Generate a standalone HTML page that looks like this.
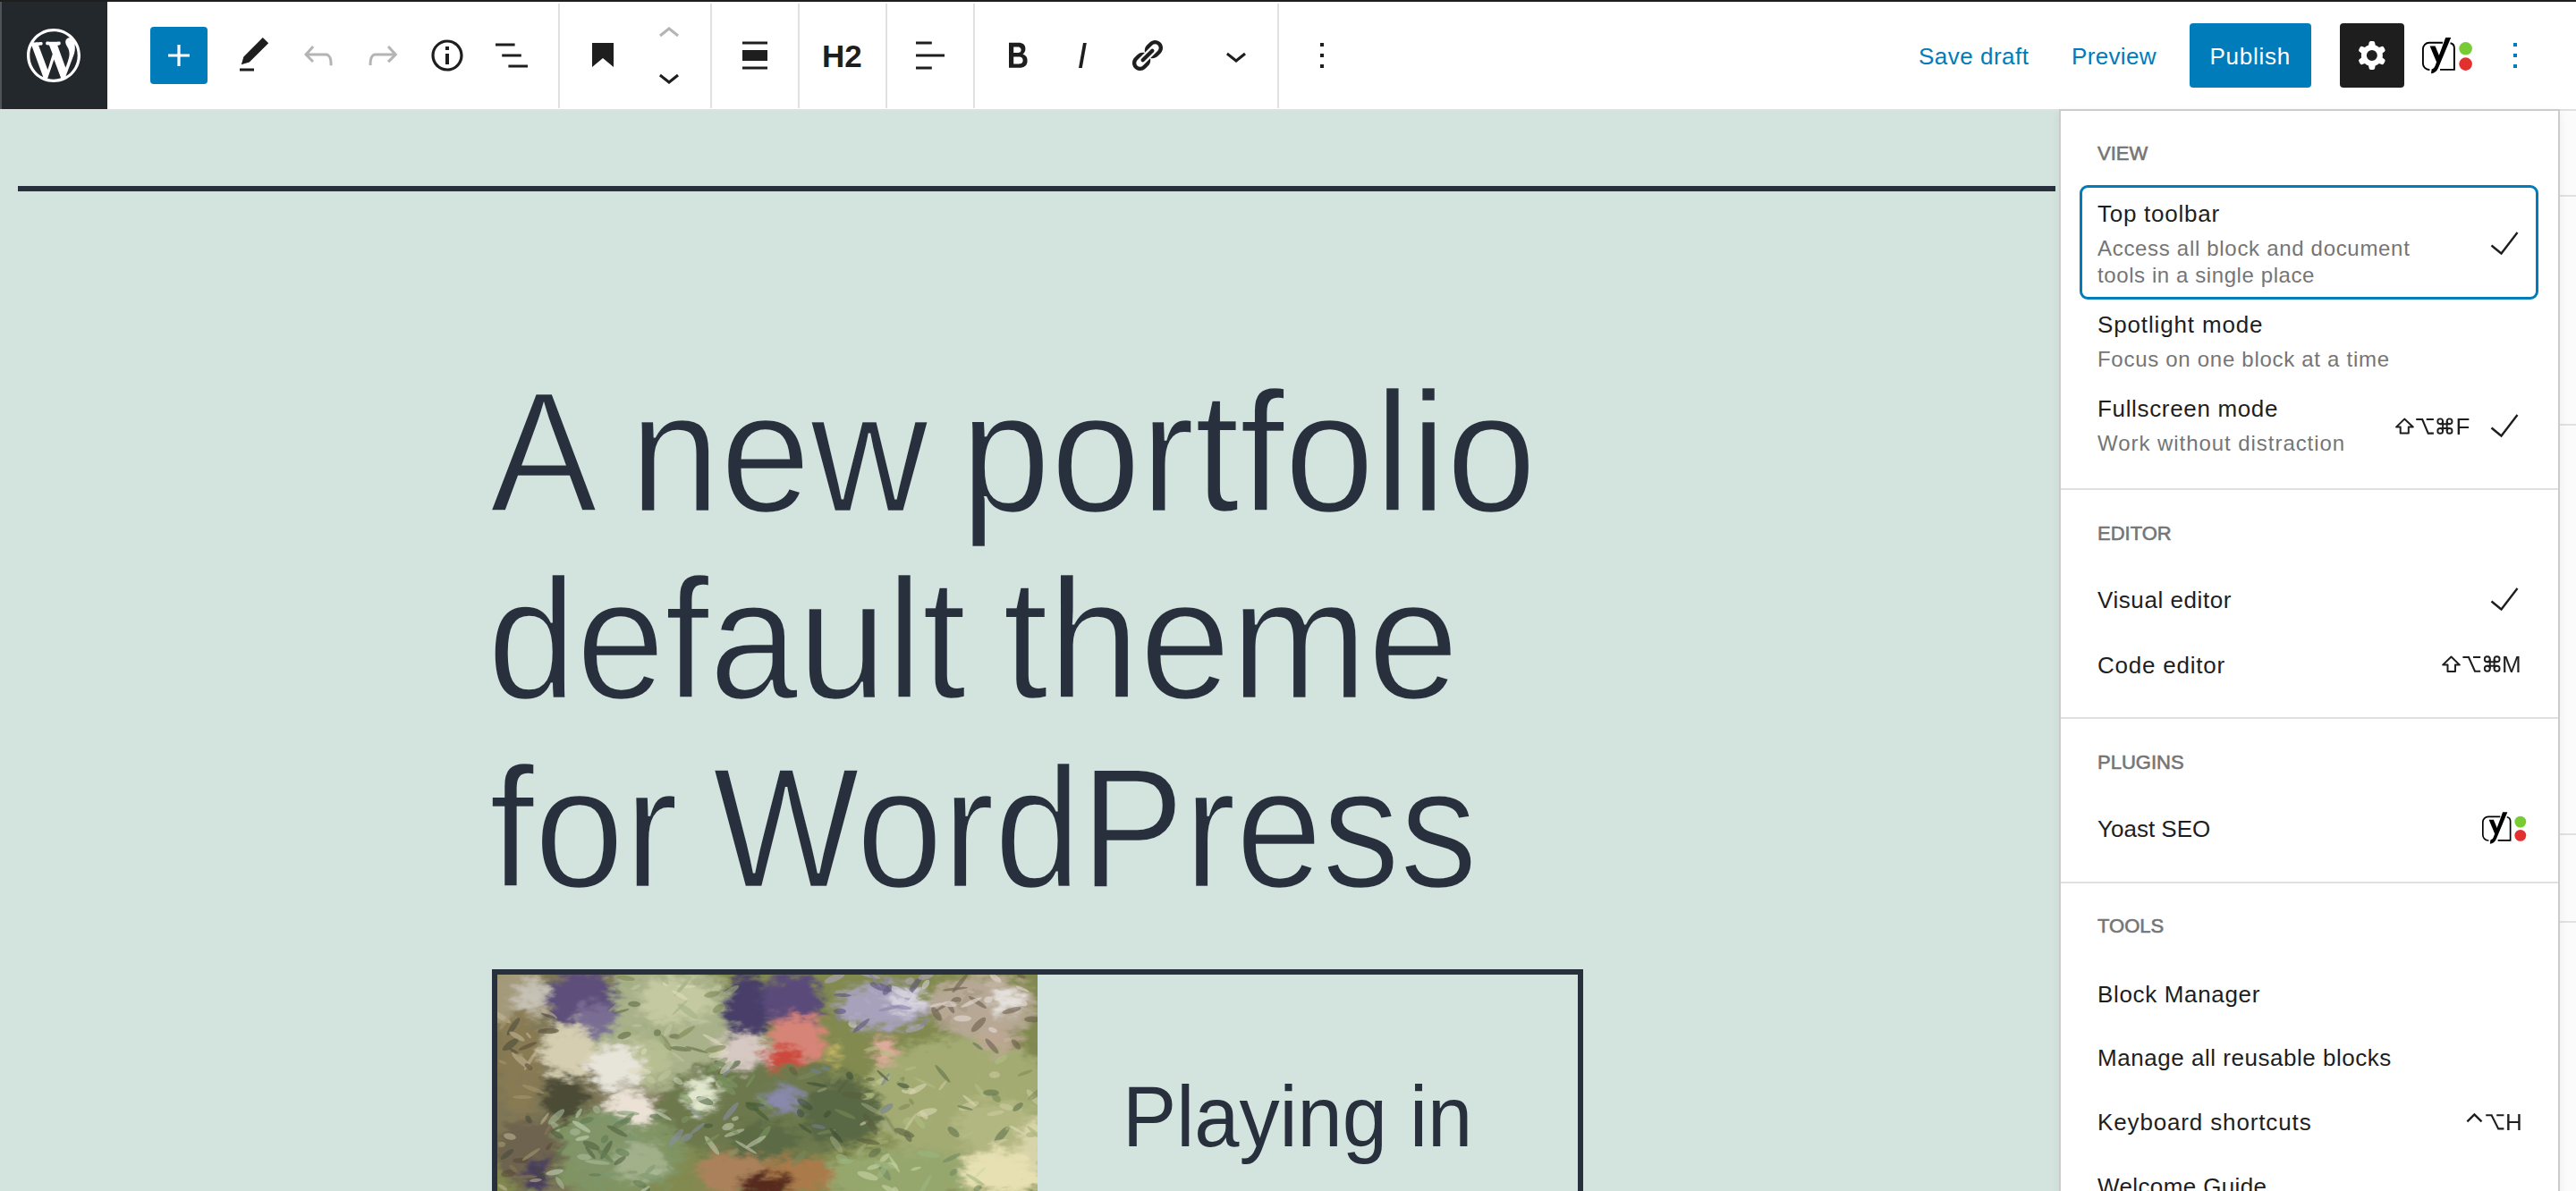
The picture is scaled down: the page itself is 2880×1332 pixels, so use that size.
<!DOCTYPE html>
<html><head><meta charset="utf-8">
<style>
html,body{margin:0;padding:0;}
body{width:2880px;height:1332px;overflow:hidden;position:relative;background:#d3e3de;font-family:"Liberation Sans",sans-serif;}
.a{position:absolute;}
.t{position:absolute;white-space:nowrap;line-height:1;font-family:"Liberation Sans",sans-serif;}
svg{position:absolute;overflow:visible;}
.sep{position:absolute;top:4px;width:2px;height:117px;background:#e0e0e0;}
.h{transform-origin:0 0;-webkit-text-stroke:2px #d3e3de;}
</style></head>
<body>
<div class="a" style="left:20px;top:208px;width:2278px;height:6px;background:#28303d"></div>
<div class="t" style="left:548.2px;top:410.4px;font-size:192px;color:#28303d;transform:scaleX(0.9344);transform-origin:0 0;-webkit-text-stroke:2.6px #d3e3de">A</div>
<div class="t" style="left:703.5px;top:410.4px;font-size:192px;color:#28303d;transform:scaleX(0.9472);transform-origin:0 0;-webkit-text-stroke:2.6px #d3e3de">new</div>
<div class="t" style="left:1074.1px;top:410.4px;font-size:192px;color:#28303d;transform:scaleX(0.9424);transform-origin:0 0;-webkit-text-stroke:2.6px #d3e3de">portfolio</div>
<div class="t" style="left:545.3px;top:619.4px;font-size:192px;color:#28303d;transform:scaleX(0.9287);transform-origin:0 0;-webkit-text-stroke:2.6px #d3e3de">default</div>
<div class="t" style="left:1121.2px;top:619.4px;font-size:192px;color:#28303d;transform:scaleX(0.9558);transform-origin:0 0;-webkit-text-stroke:2.6px #d3e3de">theme</div>
<div class="t" style="left:547.2px;top:830.4px;font-size:192px;color:#28303d;transform:scaleX(0.9426);transform-origin:0 0;-webkit-text-stroke:2.6px #d3e3de">for</div>
<div class="t" style="left:797.3px;top:830.4px;font-size:192px;color:#28303d;transform:scaleX(0.9034);transform-origin:0 0;-webkit-text-stroke:2.6px #d3e3de">WordPress</div>
<div class="a" style="left:550px;top:1084px;width:1208px;height:300px;border:6px solid #28303d"></div>
<div class="a" style="left:556px;top:1090px;width:604px;height:242px;overflow:hidden;background:#828a50">
<svg style="left:0;top:0" width="604" height="242" viewBox="0 0 604 242"><defs><filter id="bl" x="-20%" y="-20%" width="140%" height="140%"><feGaussianBlur stdDeviation="5" result="b"/><feTurbulence type="fractalNoise" baseFrequency="0.06 0.12" numOctaves="3" seed="7" result="n"/><feDisplacementMap in="b" in2="n" scale="26" xChannelSelector="R" yChannelSelector="G"/></filter></defs><filter id="sd"><feColorMatrix type="saturate" values="0.85"/></filter><g filter="url(#sd)"><g filter="url(#bl)"><ellipse cx="90" cy="120" rx="110" ry="140" fill="#7e7650" opacity="1" transform="rotate(0 90 120)"/><ellipse cx="190" cy="60" rx="90" ry="70" fill="#a8b282" opacity="1" transform="rotate(0 190 60)"/><ellipse cx="200" cy="30" rx="40" ry="25" fill="#c8cc9c" opacity="0.9" transform="rotate(0 200 30)"/><ellipse cx="165" cy="95" rx="30" ry="22" fill="#b8c08a" opacity="0.9" transform="rotate(0 165 95)"/><ellipse cx="300" cy="150" rx="120" ry="60" fill="#6c7a42" opacity="1" transform="rotate(0 300 150)"/><ellipse cx="520" cy="140" rx="110" ry="70" fill="#a2ac66" opacity="1" transform="rotate(0 520 140)"/><ellipse cx="560" cy="170" rx="50" ry="30" fill="#b4b878" opacity="0.9" transform="rotate(0 560 170)"/><ellipse cx="130" cy="200" rx="80" ry="50" fill="#7e9458" opacity="1" transform="rotate(0 130 200)"/><ellipse cx="450" cy="225" rx="90" ry="30" fill="#94a862" opacity="1" transform="rotate(0 450 225)"/><ellipse cx="20" cy="25" rx="40" ry="35" fill="#a49a74" opacity="1" transform="rotate(0 20 25)"/><ellipse cx="40" cy="24" rx="22" ry="16" fill="#c8c2b4" opacity="1" transform="rotate(0 40 24)"/><ellipse cx="95" cy="30" rx="40" ry="34" fill="#5e4e80" opacity="1" transform="rotate(0 95 30)"/><ellipse cx="110" cy="50" rx="22" ry="18" fill="#7a6c98" opacity="1" transform="rotate(0 110 50)"/><ellipse cx="80" cy="85" rx="32" ry="30" fill="#d6ceaa" opacity="1" transform="rotate(0 80 85)"/><ellipse cx="132" cy="104" rx="32" ry="24" fill="#e8e4d8" opacity="1" transform="rotate(0 132 104)"/><ellipse cx="148" cy="152" rx="28" ry="22" fill="#ece2d2" opacity="1" transform="rotate(0 148 152)"/><ellipse cx="25" cy="100" rx="25" ry="60" fill="#8a7a48" opacity="1" transform="rotate(0 25 100)"/><ellipse cx="75" cy="138" rx="26" ry="24" fill="#4c4c32" opacity="1" transform="rotate(0 75 138)"/><ellipse cx="35" cy="200" rx="38" ry="40" fill="#6e6448" opacity="1" transform="rotate(0 35 200)"/><ellipse cx="45" cy="225" rx="14" ry="20" fill="#4a3e60" opacity="1" transform="rotate(0 45 225)"/><ellipse cx="120" cy="190" rx="45" ry="35" fill="#7e9660" opacity="1" transform="rotate(0 120 190)"/><ellipse cx="160" cy="210" rx="30" ry="22" fill="#a4b488" opacity="0.9" transform="rotate(0 160 210)"/><ellipse cx="279" cy="38" rx="26" ry="38" fill="#483c6e" opacity="1" transform="rotate(0 279 38)"/><ellipse cx="330" cy="30" rx="34" ry="32" fill="#5a4a80" opacity="1" transform="rotate(0 330 30)"/><ellipse cx="274" cy="86" rx="30" ry="20" fill="#d8c8c0" opacity="1" transform="rotate(0 274 86)"/><ellipse cx="228" cy="135" rx="17" ry="20" fill="#e0e8c8" opacity="1" transform="rotate(0 228 135)"/><ellipse cx="336" cy="72" rx="32" ry="28" fill="#e08070" opacity="1" transform="rotate(0 336 72)"/><ellipse cx="320" cy="93" rx="22" ry="12" fill="#d83a2a" opacity="1" transform="rotate(0 320 93)"/><ellipse cx="377" cy="88" rx="8" ry="10" fill="#d8c050" opacity="0.9" transform="rotate(0 377 88)"/><ellipse cx="433" cy="86" rx="13" ry="15" fill="#e8a898" opacity="1" transform="rotate(0 433 86)"/><ellipse cx="432" cy="35" rx="52" ry="26" fill="#a8a0c0" opacity="1" transform="rotate(0 432 35)"/><ellipse cx="460" cy="30" rx="22" ry="12" fill="#d8d4e0" opacity="1" transform="rotate(0 460 30)"/><ellipse cx="543" cy="35" rx="60" ry="36" fill="#b8a890" opacity="1" transform="rotate(0 543 35)"/><ellipse cx="570" cy="30" rx="18" ry="12" fill="#e6e2dc" opacity="1" transform="rotate(0 570 30)"/><ellipse cx="560" cy="75" rx="24" ry="12" fill="#c8a898" opacity="0.8" transform="rotate(0 560 75)"/><ellipse cx="320" cy="139" rx="22" ry="13" fill="#8888b0" opacity="1" transform="rotate(0 320 139)"/><ellipse cx="385" cy="155" rx="44" ry="38" fill="#586a3c" opacity="1" transform="rotate(0 385 155)"/><ellipse cx="300" cy="185" rx="40" ry="20" fill="#5a6c3c" opacity="1" transform="rotate(0 300 185)"/><ellipse cx="265" cy="222" rx="42" ry="24" fill="#b08050" opacity="1" transform="rotate(0 265 222)"/><ellipse cx="335" cy="225" rx="40" ry="20" fill="#b07838" opacity="1" transform="rotate(0 335 225)"/><ellipse cx="300" cy="236" rx="30" ry="14" fill="#5a2818" opacity="1" transform="rotate(0 300 236)"/><ellipse cx="565" cy="222" rx="48" ry="26" fill="#e8e0a8" opacity="1" transform="rotate(0 565 222)"/><ellipse cx="600" cy="190" rx="16" ry="30" fill="#d8d4a0" opacity="1" transform="rotate(0 600 190)"/></g><g opacity="0.8"><ellipse cx="27" cy="152" rx="13" ry="2.7" fill="#8a7a50" opacity="0.7" transform="rotate(1 27 152)"/><ellipse cx="11" cy="201" rx="9" ry="3.0" fill="#4a4a38" opacity="0.7" transform="rotate(-38 11 201)"/><ellipse cx="18" cy="58" rx="12" ry="3.2" fill="#4a4a38" opacity="0.7" transform="rotate(-55 18 58)"/><ellipse cx="58" cy="171" rx="10" ry="1.9" fill="#8a7a50" opacity="0.7" transform="rotate(-58 58 171)"/><ellipse cx="4" cy="47" rx="13" ry="3.0" fill="#c8b890" opacity="0.7" transform="rotate(33 4 47)"/><ellipse cx="26" cy="208" rx="9" ry="3.1" fill="#5a4a30" opacity="0.7" transform="rotate(-0 26 208)"/><ellipse cx="27" cy="96" rx="14" ry="4.0" fill="#c8b890" opacity="0.7" transform="rotate(41 27 96)"/><ellipse cx="19" cy="86" rx="7" ry="1.7" fill="#4a4a38" opacity="0.7" transform="rotate(32 19 86)"/><ellipse cx="6" cy="98" rx="5" ry="1.5" fill="#a89868" opacity="0.7" transform="rotate(22 6 98)"/><ellipse cx="13" cy="222" rx="9" ry="4.0" fill="#5a4a30" opacity="0.7" transform="rotate(-12 13 222)"/><ellipse cx="34" cy="80" rx="11" ry="2.3" fill="#5a4a30" opacity="0.7" transform="rotate(-23 34 80)"/><ellipse cx="58" cy="192" rx="5" ry="2.1" fill="#5a4a30" opacity="0.7" transform="rotate(-48 58 192)"/><ellipse cx="28" cy="137" rx="11" ry="2.0" fill="#a89868" opacity="0.7" transform="rotate(1 28 137)"/><ellipse cx="25" cy="117" rx="8" ry="4.0" fill="#8a7a50" opacity="0.7" transform="rotate(-60 25 117)"/><ellipse cx="18" cy="217" rx="6" ry="2.5" fill="#8a7a50" opacity="0.7" transform="rotate(43 18 217)"/><ellipse cx="6" cy="238" rx="6" ry="2.1" fill="#c8b890" opacity="0.7" transform="rotate(33 6 238)"/><ellipse cx="50" cy="117" rx="5" ry="2.0" fill="#5a4a30" opacity="0.7" transform="rotate(16 50 117)"/><ellipse cx="36" cy="114" rx="9" ry="3.9" fill="#8a7a50" opacity="0.7" transform="rotate(-2 36 114)"/><ellipse cx="8" cy="117" rx="10" ry="2.3" fill="#8a7a50" opacity="0.7" transform="rotate(-33 8 117)"/><ellipse cx="15" cy="78" rx="11" ry="3.9" fill="#4a4a38" opacity="0.7" transform="rotate(-36 15 78)"/><ellipse cx="53" cy="161" rx="8" ry="1.8" fill="#c8b890" opacity="0.7" transform="rotate(-55 53 161)"/><ellipse cx="14" cy="181" rx="7" ry="3.6" fill="#c8b890" opacity="0.7" transform="rotate(12 14 181)"/><ellipse cx="31" cy="226" rx="14" ry="1.8" fill="#8a7a50" opacity="0.7" transform="rotate(-2 31 226)"/><ellipse cx="37" cy="96" rx="13" ry="2.0" fill="#c8b890" opacity="0.7" transform="rotate(-58 37 96)"/><ellipse cx="25" cy="90" rx="4" ry="2.2" fill="#a89868" opacity="0.7" transform="rotate(4 25 90)"/><ellipse cx="6" cy="68" rx="9" ry="2.3" fill="#8a7a50" opacity="0.7" transform="rotate(28 6 68)"/><ellipse cx="35" cy="68" rx="4" ry="1.5" fill="#c8b890" opacity="0.7" transform="rotate(49 35 68)"/><ellipse cx="58" cy="44" rx="10" ry="2.7" fill="#c8b890" opacity="0.7" transform="rotate(28 58 44)"/><ellipse cx="8" cy="54" rx="9" ry="2.4" fill="#a89868" opacity="0.7" transform="rotate(-55 8 54)"/><ellipse cx="48" cy="223" rx="8" ry="3.2" fill="#4a4a38" opacity="0.7" transform="rotate(48 48 223)"/><ellipse cx="57" cy="46" rx="9" ry="1.5" fill="#4a4a38" opacity="0.7" transform="rotate(19 57 46)"/><ellipse cx="35" cy="162" rx="5" ry="3.1" fill="#4a4a38" opacity="0.7" transform="rotate(59 35 162)"/><ellipse cx="44" cy="118" rx="11" ry="3.0" fill="#8a7a50" opacity="0.7" transform="rotate(-7 44 118)"/><ellipse cx="5" cy="190" rx="4" ry="3.0" fill="#a89868" opacity="0.7" transform="rotate(-2 5 190)"/><ellipse cx="57" cy="63" rx="12" ry="3.2" fill="#5a4a30" opacity="0.7" transform="rotate(-2 57 63)"/><ellipse cx="22" cy="69" rx="10" ry="2.8" fill="#c8b890" opacity="0.7" transform="rotate(30 22 69)"/><ellipse cx="40" cy="128" rx="13" ry="2.3" fill="#a89868" opacity="0.7" transform="rotate(20 40 128)"/><ellipse cx="38" cy="201" rx="12" ry="2.0" fill="#a89868" opacity="0.7" transform="rotate(-34 38 201)"/><ellipse cx="35" cy="103" rx="5" ry="2.7" fill="#5a4a30" opacity="0.7" transform="rotate(40 35 103)"/><ellipse cx="43" cy="230" rx="7" ry="1.9" fill="#c8b890" opacity="0.7" transform="rotate(-6 43 230)"/><ellipse cx="250" cy="100" rx="8" ry="2.8" fill="#5a6a3a" opacity="0.7" transform="rotate(21 250 100)"/><ellipse cx="189" cy="9" rx="4" ry="3.7" fill="#e0dcb8" opacity="0.7" transform="rotate(-55 189 9)"/><ellipse cx="204" cy="37" rx="12" ry="1.5" fill="#a0b078" opacity="0.7" transform="rotate(-44 204 37)"/><ellipse cx="155" cy="92" rx="7" ry="3.4" fill="#c0c898" opacity="0.7" transform="rotate(36 155 92)"/><ellipse cx="188" cy="76" rx="11" ry="3.5" fill="#7a8848" opacity="0.7" transform="rotate(55 188 76)"/><ellipse cx="156" cy="57" rx="6" ry="1.5" fill="#c0c898" opacity="0.7" transform="rotate(-3 156 57)"/><ellipse cx="153" cy="33" rx="7" ry="3.2" fill="#5a6a3a" opacity="0.7" transform="rotate(2 153 33)"/><ellipse cx="260" cy="19" rx="12" ry="3.2" fill="#a0b078" opacity="0.7" transform="rotate(-33 260 19)"/><ellipse cx="251" cy="87" rx="5" ry="2.6" fill="#c0c898" opacity="0.7" transform="rotate(15 251 87)"/><ellipse cx="179" cy="68" rx="13" ry="3.5" fill="#a0b078" opacity="0.7" transform="rotate(53 179 68)"/><ellipse cx="172" cy="118" rx="5" ry="3.7" fill="#c0c898" opacity="0.7" transform="rotate(36 172 118)"/><ellipse cx="158" cy="108" rx="14" ry="3.9" fill="#e0dcb8" opacity="0.7" transform="rotate(4 158 108)"/><ellipse cx="164" cy="86" rx="4" ry="2.8" fill="#e0dcb8" opacity="0.7" transform="rotate(-56 164 86)"/><ellipse cx="202" cy="92" rx="9" ry="1.6" fill="#c0c898" opacity="0.7" transform="rotate(37 202 92)"/><ellipse cx="186" cy="4" rx="9" ry="3.2" fill="#a0b078" opacity="0.7" transform="rotate(50 186 4)"/><ellipse cx="149" cy="62" rx="11" ry="3.6" fill="#a0b078" opacity="0.7" transform="rotate(23 149 62)"/><ellipse cx="205" cy="83" rx="12" ry="2.6" fill="#5a6a3a" opacity="0.7" transform="rotate(7 205 83)"/><ellipse cx="213" cy="63" rx="12" ry="2.9" fill="#a0b078" opacity="0.7" transform="rotate(-23 213 63)"/><ellipse cx="254" cy="104" rx="10" ry="2.3" fill="#5a6a3a" opacity="0.7" transform="rotate(-43 254 104)"/><ellipse cx="198" cy="69" rx="6" ry="2.8" fill="#5a6a3a" opacity="0.7" transform="rotate(0 198 69)"/><ellipse cx="179" cy="65" rx="4" ry="3.8" fill="#5a6a3a" opacity="0.7" transform="rotate(5 179 65)"/><ellipse cx="146" cy="11" rx="6" ry="3.8" fill="#a0b078" opacity="0.7" transform="rotate(-5 146 11)"/><ellipse cx="165" cy="57" rx="5" ry="2.6" fill="#a0b078" opacity="0.7" transform="rotate(38 165 57)"/><ellipse cx="198" cy="13" rx="8" ry="1.6" fill="#c0c898" opacity="0.7" transform="rotate(-29 198 13)"/><ellipse cx="135" cy="19" rx="4" ry="2.2" fill="#7a8848" opacity="0.7" transform="rotate(27 135 19)"/><ellipse cx="211" cy="13" rx="11" ry="1.8" fill="#e0dcb8" opacity="0.7" transform="rotate(1 211 13)"/><ellipse cx="223" cy="84" rx="13" ry="1.6" fill="#5a6a3a" opacity="0.7" transform="rotate(16 223 84)"/><ellipse cx="210" cy="65" rx="13" ry="2.8" fill="#7a8848" opacity="0.7" transform="rotate(-34 210 65)"/><ellipse cx="241" cy="73" rx="13" ry="2.1" fill="#e0dcb8" opacity="0.7" transform="rotate(29 241 73)"/><ellipse cx="247" cy="38" rx="7" ry="3.8" fill="#7a8848" opacity="0.7" transform="rotate(-34 247 38)"/><ellipse cx="245" cy="16" rx="6" ry="3.3" fill="#c0c898" opacity="0.7" transform="rotate(-29 245 16)"/><ellipse cx="187" cy="113" rx="9" ry="3.3" fill="#c0c898" opacity="0.7" transform="rotate(-36 187 113)"/><ellipse cx="142" cy="68" rx="8" ry="3.6" fill="#5a6a3a" opacity="0.7" transform="rotate(-17 142 68)"/><ellipse cx="213" cy="41" rx="14" ry="3.6" fill="#a0b078" opacity="0.7" transform="rotate(36 213 41)"/><ellipse cx="144" cy="4" rx="10" ry="2.8" fill="#7a8848" opacity="0.7" transform="rotate(8 144 4)"/><ellipse cx="155" cy="14" rx="6" ry="1.9" fill="#c0c898" opacity="0.7" transform="rotate(-26 155 14)"/><ellipse cx="205" cy="16" rx="11" ry="1.7" fill="#a0b078" opacity="0.7" transform="rotate(-48 205 16)"/><ellipse cx="191" cy="62" rx="8" ry="3.0" fill="#c0c898" opacity="0.7" transform="rotate(-58 191 62)"/><ellipse cx="240" cy="22" rx="9" ry="3.3" fill="#7a8848" opacity="0.7" transform="rotate(-11 240 22)"/><ellipse cx="209" cy="11" rx="12" ry="2.3" fill="#a0b078" opacity="0.7" transform="rotate(-50 209 11)"/><ellipse cx="204" cy="23" rx="10" ry="2.4" fill="#e0dcb8" opacity="0.7" transform="rotate(31 204 23)"/><ellipse cx="248" cy="89" rx="12" ry="3.5" fill="#e0dcb8" opacity="0.7" transform="rotate(-11 248 89)"/><ellipse cx="244" cy="83" rx="12" ry="3.4" fill="#7a8848" opacity="0.7" transform="rotate(-11 244 83)"/><ellipse cx="139" cy="41" rx="9" ry="1.5" fill="#5a6a3a" opacity="0.7" transform="rotate(-17 139 41)"/><ellipse cx="136" cy="33" rx="14" ry="2.2" fill="#a0b078" opacity="0.7" transform="rotate(-34 136 33)"/><ellipse cx="140" cy="199" rx="8" ry="4.0" fill="#5a7a48" opacity="0.7" transform="rotate(17 140 199)"/><ellipse cx="167" cy="240" rx="4" ry="3.0" fill="#4a6038" opacity="0.7" transform="rotate(29 167 240)"/><ellipse cx="122" cy="196" rx="12" ry="3.1" fill="#4a6038" opacity="0.7" transform="rotate(-59 122 196)"/><ellipse cx="95" cy="233" rx="10" ry="2.8" fill="#7a9868" opacity="0.7" transform="rotate(56 95 233)"/><ellipse cx="178" cy="159" rx="8" ry="3.1" fill="#5a7a48" opacity="0.7" transform="rotate(6 178 159)"/><ellipse cx="114" cy="236" rx="8" ry="3.9" fill="#7a9868" opacity="0.7" transform="rotate(43 114 236)"/><ellipse cx="146" cy="155" rx="13" ry="2.6" fill="#7a9868" opacity="0.7" transform="rotate(3 146 155)"/><ellipse cx="104" cy="199" rx="9" ry="2.2" fill="#4a6038" opacity="0.7" transform="rotate(52 104 199)"/><ellipse cx="64" cy="221" rx="10" ry="3.1" fill="#c8d8b8" opacity="0.7" transform="rotate(-11 64 221)"/><ellipse cx="67" cy="179" rx="8" ry="3.0" fill="#4a6038" opacity="0.7" transform="rotate(27 67 179)"/><ellipse cx="70" cy="233" rx="8" ry="2.7" fill="#a8c098" opacity="0.7" transform="rotate(57 70 233)"/><ellipse cx="66" cy="159" rx="12" ry="3.8" fill="#a8c098" opacity="0.7" transform="rotate(-43 66 159)"/><ellipse cx="145" cy="161" rx="10" ry="2.6" fill="#5a7a48" opacity="0.7" transform="rotate(-36 145 161)"/><ellipse cx="110" cy="164" rx="8" ry="1.8" fill="#7a9868" opacity="0.7" transform="rotate(-10 110 164)"/><ellipse cx="97" cy="204" rx="8" ry="3.4" fill="#a8c098" opacity="0.7" transform="rotate(4 97 204)"/><ellipse cx="193" cy="218" rx="6" ry="1.8" fill="#7a9868" opacity="0.7" transform="rotate(47 193 218)"/><ellipse cx="147" cy="183" rx="7" ry="3.2" fill="#7a9868" opacity="0.7" transform="rotate(8 147 183)"/><ellipse cx="87" cy="176" rx="6" ry="3.9" fill="#a8c098" opacity="0.7" transform="rotate(0 87 176)"/><ellipse cx="183" cy="154" rx="5" ry="2.2" fill="#7a9868" opacity="0.7" transform="rotate(-9 183 154)"/><ellipse cx="65" cy="170" rx="7" ry="3.4" fill="#a8c098" opacity="0.7" transform="rotate(50 65 170)"/><ellipse cx="137" cy="208" rx="8" ry="2.7" fill="#4a6038" opacity="0.7" transform="rotate(-35 137 208)"/><ellipse cx="129" cy="162" rx="13" ry="3.5" fill="#7a9868" opacity="0.7" transform="rotate(-6 129 162)"/><ellipse cx="177" cy="221" rx="8" ry="3.4" fill="#a8c098" opacity="0.7" transform="rotate(-13 177 221)"/><ellipse cx="112" cy="210" rx="14" ry="2.3" fill="#a8c098" opacity="0.7" transform="rotate(6 112 210)"/><ellipse cx="120" cy="184" rx="5" ry="3.7" fill="#5a7a48" opacity="0.7" transform="rotate(-51 120 184)"/><ellipse cx="120" cy="202" rx="12" ry="2.7" fill="#5a7a48" opacity="0.7" transform="rotate(39 120 202)"/><ellipse cx="71" cy="170" rx="11" ry="1.7" fill="#4a6038" opacity="0.7" transform="rotate(-24 71 170)"/><ellipse cx="100" cy="163" rx="8" ry="3.3" fill="#5a7a48" opacity="0.7" transform="rotate(-16 100 163)"/><ellipse cx="105" cy="191" rx="10" ry="3.8" fill="#4a6038" opacity="0.7" transform="rotate(22 105 191)"/><ellipse cx="121" cy="224" rx="7" ry="2.3" fill="#7a9868" opacity="0.7" transform="rotate(-12 121 224)"/><ellipse cx="95" cy="183" rx="8" ry="2.4" fill="#c8d8b8" opacity="0.7" transform="rotate(-13 95 183)"/><ellipse cx="171" cy="218" rx="8" ry="2.5" fill="#7a9868" opacity="0.7" transform="rotate(-41 171 218)"/><ellipse cx="139" cy="166" rx="12" ry="3.7" fill="#5a7a48" opacity="0.7" transform="rotate(-26 139 166)"/><ellipse cx="91" cy="155" rx="6" ry="2.2" fill="#c8d8b8" opacity="0.7" transform="rotate(-57 91 155)"/><ellipse cx="69" cy="200" rx="12" ry="1.7" fill="#5a7a48" opacity="0.7" transform="rotate(-50 69 200)"/><ellipse cx="186" cy="158" rx="10" ry="1.9" fill="#c8d8b8" opacity="0.7" transform="rotate(29 186 158)"/><ellipse cx="94" cy="170" rx="12" ry="2.8" fill="#c8d8b8" opacity="0.7" transform="rotate(32 94 170)"/><ellipse cx="109" cy="224" rx="7" ry="1.8" fill="#5a7a48" opacity="0.7" transform="rotate(-1 109 224)"/><ellipse cx="159" cy="234" rx="8" ry="3.6" fill="#5a7a48" opacity="0.7" transform="rotate(20 159 234)"/><ellipse cx="173" cy="227" rx="13" ry="3.9" fill="#7a9868" opacity="0.7" transform="rotate(17 173 227)"/><ellipse cx="111" cy="151" rx="5" ry="3.8" fill="#a8c098" opacity="0.7" transform="rotate(50 111 151)"/><ellipse cx="164" cy="241" rx="8" ry="1.9" fill="#c8d8b8" opacity="0.7" transform="rotate(-35 164 241)"/><ellipse cx="134" cy="175" rx="13" ry="2.7" fill="#4a6038" opacity="0.7" transform="rotate(28 134 175)"/><ellipse cx="151" cy="221" rx="6" ry="1.7" fill="#7a9868" opacity="0.7" transform="rotate(-5 151 221)"/><ellipse cx="127" cy="224" rx="7" ry="2.0" fill="#7a9868" opacity="0.7" transform="rotate(-17 127 224)"/><ellipse cx="224" cy="172" rx="10" ry="2.1" fill="#8890b0" opacity="0.7" transform="rotate(-38 224 172)"/><ellipse cx="240" cy="191" rx="13" ry="3.1" fill="#c8d0b0" opacity="0.7" transform="rotate(53 240 191)"/><ellipse cx="285" cy="148" rx="8" ry="3.9" fill="#3e5a30" opacity="0.7" transform="rotate(19 285 148)"/><ellipse cx="248" cy="122" rx="4" ry="3.9" fill="#c8d0b0" opacity="0.7" transform="rotate(36 248 122)"/><ellipse cx="298" cy="179" rx="12" ry="3.5" fill="#7a9a58" opacity="0.7" transform="rotate(-53 298 179)"/><ellipse cx="289" cy="187" rx="13" ry="2.6" fill="#c8d0b0" opacity="0.7" transform="rotate(-30 289 187)"/><ellipse cx="261" cy="116" rx="6" ry="2.3" fill="#7a9a58" opacity="0.7" transform="rotate(-29 261 116)"/><ellipse cx="264" cy="199" rx="7" ry="2.8" fill="#7a9a58" opacity="0.7" transform="rotate(-42 264 199)"/><ellipse cx="200" cy="182" rx="12" ry="3.6" fill="#8890b0" opacity="0.7" transform="rotate(-50 200 182)"/><ellipse cx="261" cy="153" rx="13" ry="3.2" fill="#8890b0" opacity="0.7" transform="rotate(-50 261 153)"/><ellipse cx="202" cy="119" rx="6" ry="3.2" fill="#c8d0b0" opacity="0.7" transform="rotate(34 202 119)"/><ellipse cx="221" cy="154" rx="9" ry="1.9" fill="#8890b0" opacity="0.7" transform="rotate(40 221 154)"/><ellipse cx="232" cy="141" rx="10" ry="4.0" fill="#3e5a30" opacity="0.7" transform="rotate(20 232 141)"/><ellipse cx="236" cy="169" rx="5" ry="2.5" fill="#3e5a30" opacity="0.7" transform="rotate(-5 236 169)"/><ellipse cx="265" cy="101" rx="8" ry="3.3" fill="#3e5a30" opacity="0.7" transform="rotate(-32 265 101)"/><ellipse cx="246" cy="101" rx="14" ry="3.5" fill="#7a9a58" opacity="0.7" transform="rotate(-35 246 101)"/><ellipse cx="229" cy="138" rx="9" ry="2.2" fill="#c8d0b0" opacity="0.7" transform="rotate(-20 229 138)"/><ellipse cx="256" cy="109" rx="6" ry="2.4" fill="#8890b0" opacity="0.7" transform="rotate(-47 256 109)"/><ellipse cx="295" cy="156" rx="11" ry="2.3" fill="#3e5a30" opacity="0.7" transform="rotate(39 295 156)"/><ellipse cx="210" cy="162" rx="5" ry="3.1" fill="#7a9a58" opacity="0.7" transform="rotate(-38 210 162)"/><ellipse cx="240" cy="184" rx="10" ry="1.7" fill="#7a9a58" opacity="0.7" transform="rotate(-33 240 184)"/><ellipse cx="299" cy="143" rx="12" ry="2.4" fill="#7a9a58" opacity="0.7" transform="rotate(39 299 143)"/><ellipse cx="265" cy="177" rx="12" ry="2.5" fill="#c8d0b0" opacity="0.7" transform="rotate(-20 265 177)"/><ellipse cx="262" cy="173" rx="10" ry="2.3" fill="#7a9a58" opacity="0.7" transform="rotate(35 262 173)"/><ellipse cx="266" cy="161" rx="4" ry="2.3" fill="#c8d0b0" opacity="0.7" transform="rotate(-19 266 161)"/><ellipse cx="211" cy="138" rx="9" ry="3.5" fill="#7a9a58" opacity="0.7" transform="rotate(39 211 138)"/><ellipse cx="225" cy="154" rx="7" ry="2.1" fill="#7a9a58" opacity="0.7" transform="rotate(13 225 154)"/><ellipse cx="257" cy="120" rx="13" ry="4.0" fill="#7a9a58" opacity="0.7" transform="rotate(25 257 120)"/><ellipse cx="257" cy="103" rx="11" ry="3.4" fill="#c8d0b0" opacity="0.7" transform="rotate(-44 257 103)"/><ellipse cx="258" cy="170" rx="7" ry="3.8" fill="#c8d0b0" opacity="0.7" transform="rotate(-17 258 170)"/><ellipse cx="288" cy="145" rx="11" ry="2.1" fill="#3e5a30" opacity="0.7" transform="rotate(8 288 145)"/><ellipse cx="256" cy="126" rx="13" ry="4.0" fill="#7a9a58" opacity="0.7" transform="rotate(38 256 126)"/><ellipse cx="212" cy="182" rx="7" ry="3.7" fill="#8890b0" opacity="0.7" transform="rotate(-31 212 182)"/><ellipse cx="283" cy="119" rx="9" ry="1.7" fill="#7a9a58" opacity="0.7" transform="rotate(-56 283 119)"/><ellipse cx="278" cy="193" rx="14" ry="1.8" fill="#c8d0b0" opacity="0.7" transform="rotate(31 278 193)"/><ellipse cx="438" cy="38" rx="12" ry="1.9" fill="#8a80b0" opacity="0.7" transform="rotate(-11 438 38)"/><ellipse cx="386" cy="23" rx="10" ry="1.9" fill="#5a5080" opacity="0.7" transform="rotate(2 386 23)"/><ellipse cx="397" cy="56" rx="5" ry="3.5" fill="#d8d4e0" opacity="0.7" transform="rotate(27 397 56)"/><ellipse cx="414" cy="30" rx="5" ry="2.4" fill="#b0a8c8" opacity="0.7" transform="rotate(48 414 30)"/><ellipse cx="453" cy="29" rx="14" ry="3.6" fill="#b0a8c8" opacity="0.7" transform="rotate(43 453 29)"/><ellipse cx="461" cy="7" rx="5" ry="3.8" fill="#b0a8c8" opacity="0.7" transform="rotate(-20 461 7)"/><ellipse cx="416" cy="1" rx="13" ry="2.2" fill="#b0a8c8" opacity="0.7" transform="rotate(14 416 1)"/><ellipse cx="451" cy="36" rx="12" ry="2.3" fill="#8a80b0" opacity="0.7" transform="rotate(11 451 36)"/><ellipse cx="397" cy="51" rx="6" ry="3.7" fill="#b0a8c8" opacity="0.7" transform="rotate(57 397 51)"/><ellipse cx="446" cy="32" rx="6" ry="2.3" fill="#d8d4e0" opacity="0.7" transform="rotate(-13 446 32)"/><ellipse cx="467" cy="60" rx="11" ry="3.7" fill="#b0a8c8" opacity="0.7" transform="rotate(-16 467 60)"/><ellipse cx="432" cy="10" rx="10" ry="2.6" fill="#8a80b0" opacity="0.7" transform="rotate(-45 432 10)"/><ellipse cx="381" cy="48" rx="5" ry="2.8" fill="#8a80b0" opacity="0.7" transform="rotate(54 381 48)"/><ellipse cx="403" cy="44" rx="4" ry="1.9" fill="#b0a8c8" opacity="0.7" transform="rotate(-7 403 44)"/><ellipse cx="460" cy="24" rx="8" ry="3.0" fill="#8a80b0" opacity="0.7" transform="rotate(-54 460 24)"/><ellipse cx="420" cy="19" rx="7" ry="1.9" fill="#b0a8c8" opacity="0.7" transform="rotate(33 420 19)"/><ellipse cx="467" cy="12" rx="13" ry="3.2" fill="#5a5080" opacity="0.7" transform="rotate(-53 467 12)"/><ellipse cx="462" cy="21" rx="9" ry="1.9" fill="#d8d4e0" opacity="0.7" transform="rotate(46 462 21)"/><ellipse cx="429" cy="14" rx="13" ry="3.9" fill="#5a5080" opacity="0.7" transform="rotate(18 429 14)"/><ellipse cx="450" cy="19" rx="13" ry="3.7" fill="#d8d4e0" opacity="0.7" transform="rotate(26 450 19)"/><ellipse cx="407" cy="57" rx="12" ry="2.5" fill="#5a5080" opacity="0.7" transform="rotate(-40 407 57)"/><ellipse cx="383" cy="41" rx="7" ry="3.3" fill="#5a5080" opacity="0.7" transform="rotate(0 383 41)"/><ellipse cx="457" cy="22" rx="11" ry="3.7" fill="#d8d4e0" opacity="0.7" transform="rotate(11 457 22)"/><ellipse cx="477" cy="54" rx="6" ry="2.1" fill="#8a80b0" opacity="0.7" transform="rotate(-44 477 54)"/><ellipse cx="421" cy="5" rx="13" ry="1.7" fill="#8a80b0" opacity="0.7" transform="rotate(49 421 5)"/><ellipse cx="436" cy="17" rx="7" ry="3.5" fill="#5a5080" opacity="0.7" transform="rotate(-50 436 17)"/><ellipse cx="479" cy="11" rx="6" ry="3.3" fill="#d8d4e0" opacity="0.7" transform="rotate(-57 479 11)"/><ellipse cx="479" cy="2" rx="9" ry="3.4" fill="#b0a8c8" opacity="0.7" transform="rotate(-14 479 2)"/><ellipse cx="377" cy="4" rx="12" ry="3.8" fill="#b0a8c8" opacity="0.7" transform="rotate(-22 377 4)"/><ellipse cx="456" cy="31" rx="9" ry="3.6" fill="#d8d4e0" opacity="0.7" transform="rotate(22 456 31)"/><ellipse cx="554" cy="62" rx="5" ry="2.6" fill="#e8e0d8" opacity="0.7" transform="rotate(20 554 62)"/><ellipse cx="578" cy="63" rx="6" ry="2.7" fill="#a89880" opacity="0.7" transform="rotate(-33 578 63)"/><ellipse cx="512" cy="16" rx="14" ry="1.6" fill="#6a5a48" opacity="0.7" transform="rotate(-6 512 16)"/><ellipse cx="520" cy="49" rx="10" ry="3.5" fill="#e8e0d8" opacity="0.7" transform="rotate(0 520 49)"/><ellipse cx="586" cy="2" rx="5" ry="1.9" fill="#6a5a48" opacity="0.7" transform="rotate(17 586 2)"/><ellipse cx="557" cy="4" rx="8" ry="3.2" fill="#e8e0d8" opacity="0.7" transform="rotate(38 557 4)"/><ellipse cx="575" cy="40" rx="11" ry="2.8" fill="#6a5a48" opacity="0.7" transform="rotate(-15 575 40)"/><ellipse cx="500" cy="55" rx="12" ry="3.5" fill="#a89880" opacity="0.7" transform="rotate(-53 500 55)"/><ellipse cx="538" cy="56" rx="11" ry="3.9" fill="#6a5a48" opacity="0.7" transform="rotate(-45 538 56)"/><ellipse cx="498" cy="36" rx="11" ry="1.6" fill="#6a5a48" opacity="0.7" transform="rotate(-31 498 36)"/><ellipse cx="491" cy="44" rx="9" ry="3.8" fill="#6a5a48" opacity="0.7" transform="rotate(57 491 44)"/><ellipse cx="517" cy="10" rx="13" ry="2.5" fill="#6a5a48" opacity="0.7" transform="rotate(-50 517 10)"/><ellipse cx="525" cy="27" rx="14" ry="3.0" fill="#a89880" opacity="0.7" transform="rotate(-55 525 27)"/><ellipse cx="553" cy="80" rx="11" ry="2.9" fill="#6a5a48" opacity="0.7" transform="rotate(49 553 80)"/><ellipse cx="537" cy="31" rx="12" ry="2.5" fill="#6a5a48" opacity="0.7" transform="rotate(34 537 31)"/><ellipse cx="532" cy="20" rx="12" ry="3.5" fill="#a89880" opacity="0.7" transform="rotate(-2 532 20)"/><ellipse cx="507" cy="37" rx="7" ry="2.6" fill="#6a5a48" opacity="0.7" transform="rotate(59 507 37)"/><ellipse cx="587" cy="16" rx="8" ry="1.7" fill="#e8e0d8" opacity="0.7" transform="rotate(23 587 16)"/><ellipse cx="598" cy="50" rx="9" ry="3.4" fill="#6a5a48" opacity="0.7" transform="rotate(1 598 50)"/><ellipse cx="513" cy="29" rx="6" ry="3.8" fill="#6a5a48" opacity="0.7" transform="rotate(-17 513 29)"/><ellipse cx="570" cy="73" rx="4" ry="2.3" fill="#c8b8a0" opacity="0.7" transform="rotate(-14 570 73)"/><ellipse cx="586" cy="31" rx="7" ry="3.7" fill="#e8e0d8" opacity="0.7" transform="rotate(20 586 31)"/><ellipse cx="529" cy="19" rx="4" ry="1.9" fill="#c8b8a0" opacity="0.7" transform="rotate(11 529 19)"/><ellipse cx="506" cy="33" rx="9" ry="3.2" fill="#e8e0d8" opacity="0.7" transform="rotate(2 506 33)"/><ellipse cx="519" cy="36" rx="8" ry="3.7" fill="#a89880" opacity="0.7" transform="rotate(40 519 36)"/><ellipse cx="530" cy="31" rx="13" ry="2.1" fill="#e8e0d8" opacity="0.7" transform="rotate(-25 530 31)"/><ellipse cx="556" cy="11" rx="12" ry="3.4" fill="#c8b8a0" opacity="0.7" transform="rotate(-2 556 11)"/><ellipse cx="580" cy="78" rx="7" ry="3.2" fill="#6a5a48" opacity="0.7" transform="rotate(50 580 78)"/><ellipse cx="549" cy="28" rx="5" ry="3.4" fill="#e8e0d8" opacity="0.7" transform="rotate(-15 549 28)"/><ellipse cx="491" cy="34" rx="8" ry="1.7" fill="#e8e0d8" opacity="0.7" transform="rotate(-14 491 34)"/><ellipse cx="458" cy="164" rx="6" ry="3.8" fill="#b0c078" opacity="0.7" transform="rotate(-36 458 164)"/><ellipse cx="472" cy="165" rx="9" ry="3.4" fill="#b0c078" opacity="0.7" transform="rotate(49 472 165)"/><ellipse cx="498" cy="111" rx="13" ry="2.3" fill="#5a7040" opacity="0.7" transform="rotate(50 498 111)"/><ellipse cx="425" cy="189" rx="13" ry="2.2" fill="#a0b068" opacity="0.7" transform="rotate(-15 425 189)"/><ellipse cx="461" cy="166" rx="13" ry="1.7" fill="#d0d098" opacity="0.7" transform="rotate(-56 461 166)"/><ellipse cx="582" cy="148" rx="7" ry="3.2" fill="#5a7040" opacity="0.7" transform="rotate(-38 582 148)"/><ellipse cx="478" cy="121" rx="13" ry="1.6" fill="#b0c078" opacity="0.7" transform="rotate(25 478 121)"/><ellipse cx="557" cy="155" rx="10" ry="2.5" fill="#d0d098" opacity="0.7" transform="rotate(-10 557 155)"/><ellipse cx="414" cy="136" rx="8" ry="3.9" fill="#b0c078" opacity="0.7" transform="rotate(-14 414 136)"/><ellipse cx="539" cy="113" rx="9" ry="2.7" fill="#a0b068" opacity="0.7" transform="rotate(-57 539 113)"/><ellipse cx="439" cy="107" rx="11" ry="2.1" fill="#a0b068" opacity="0.7" transform="rotate(-60 439 107)"/><ellipse cx="600" cy="80" rx="9" ry="3.6" fill="#7a8a48" opacity="0.7" transform="rotate(32 600 80)"/><ellipse cx="527" cy="147" rx="12" ry="3.9" fill="#d0d098" opacity="0.7" transform="rotate(-20 527 147)"/><ellipse cx="421" cy="82" rx="12" ry="2.0" fill="#b0c078" opacity="0.7" transform="rotate(-12 421 82)"/><ellipse cx="597" cy="179" rx="6" ry="3.1" fill="#a0b068" opacity="0.7" transform="rotate(-1 597 179)"/><ellipse cx="460" cy="130" rx="8" ry="3.2" fill="#e0dcb0" opacity="0.7" transform="rotate(-0 460 130)"/><ellipse cx="451" cy="119" rx="6" ry="2.8" fill="#7a8a48" opacity="0.7" transform="rotate(-45 451 119)"/><ellipse cx="602" cy="178" rx="13" ry="2.3" fill="#a0b068" opacity="0.7" transform="rotate(42 602 178)"/><ellipse cx="558" cy="138" rx="6" ry="3.7" fill="#7a8a48" opacity="0.7" transform="rotate(44 558 138)"/><ellipse cx="470" cy="128" rx="11" ry="3.2" fill="#e0dcb0" opacity="0.7" transform="rotate(-30 470 128)"/><ellipse cx="451" cy="166" rx="7" ry="2.3" fill="#a0b068" opacity="0.7" transform="rotate(31 451 166)"/><ellipse cx="569" cy="148" rx="8" ry="3.3" fill="#d0d098" opacity="0.7" transform="rotate(15 569 148)"/><ellipse cx="563" cy="95" rx="8" ry="3.2" fill="#b0c078" opacity="0.7" transform="rotate(-32 563 95)"/><ellipse cx="599" cy="137" rx="11" ry="3.5" fill="#d0d098" opacity="0.7" transform="rotate(51 599 137)"/><ellipse cx="540" cy="130" rx="10" ry="2.5" fill="#b0c078" opacity="0.7" transform="rotate(52 540 130)"/><ellipse cx="410" cy="166" rx="5" ry="1.6" fill="#e0dcb0" opacity="0.7" transform="rotate(-26 410 166)"/><ellipse cx="510" cy="176" rx="8" ry="3.8" fill="#5a7040" opacity="0.7" transform="rotate(40 510 176)"/><ellipse cx="435" cy="88" rx="8" ry="3.7" fill="#b0c078" opacity="0.7" transform="rotate(18 435 88)"/><ellipse cx="480" cy="154" rx="12" ry="4.0" fill="#e0dcb0" opacity="0.7" transform="rotate(-13 480 154)"/><ellipse cx="444" cy="114" rx="13" ry="2.6" fill="#a0b068" opacity="0.7" transform="rotate(40 444 114)"/><ellipse cx="590" cy="110" rx="9" ry="1.8" fill="#7a8a48" opacity="0.7" transform="rotate(-21 590 110)"/><ellipse cx="455" cy="148" rx="7" ry="2.5" fill="#7a8a48" opacity="0.7" transform="rotate(-21 455 148)"/><ellipse cx="498" cy="124" rx="7" ry="1.6" fill="#d0d098" opacity="0.7" transform="rotate(-52 498 124)"/><ellipse cx="537" cy="80" rx="7" ry="1.8" fill="#5a7040" opacity="0.7" transform="rotate(35 537 80)"/><ellipse cx="499" cy="130" rx="12" ry="2.5" fill="#a0b068" opacity="0.7" transform="rotate(-53 499 130)"/><ellipse cx="526" cy="179" rx="7" ry="2.0" fill="#b0c078" opacity="0.7" transform="rotate(-25 526 179)"/><ellipse cx="603" cy="133" rx="12" ry="3.3" fill="#7a8a48" opacity="0.7" transform="rotate(-39 603 133)"/><ellipse cx="593" cy="145" rx="11" ry="2.2" fill="#a0b068" opacity="0.7" transform="rotate(-57 593 145)"/><ellipse cx="463" cy="142" rx="4" ry="2.0" fill="#7a8a48" opacity="0.7" transform="rotate(55 463 142)"/><ellipse cx="556" cy="112" rx="6" ry="3.8" fill="#d0d098" opacity="0.7" transform="rotate(-1 556 112)"/><ellipse cx="564" cy="179" rx="12" ry="4.0" fill="#5a7040" opacity="0.7" transform="rotate(-48 564 179)"/><ellipse cx="482" cy="165" rx="7" ry="3.8" fill="#a0b068" opacity="0.7" transform="rotate(-57 482 165)"/><ellipse cx="429" cy="119" rx="11" ry="2.8" fill="#d0d098" opacity="0.7" transform="rotate(-27 429 119)"/><ellipse cx="528" cy="134" rx="7" ry="1.7" fill="#a0b068" opacity="0.7" transform="rotate(18 528 134)"/><ellipse cx="419" cy="120" rx="11" ry="2.0" fill="#a0b068" opacity="0.7" transform="rotate(29 419 120)"/><ellipse cx="462" cy="105" rx="7" ry="1.9" fill="#b0c078" opacity="0.7" transform="rotate(-15 462 105)"/><ellipse cx="488" cy="81" rx="9" ry="2.5" fill="#a0b068" opacity="0.7" transform="rotate(-21 488 81)"/><ellipse cx="571" cy="171" rx="4" ry="1.9" fill="#a0b068" opacity="0.7" transform="rotate(-52 571 171)"/><ellipse cx="422" cy="199" rx="8" ry="3.9" fill="#5a7040" opacity="0.7" transform="rotate(-34 422 199)"/><ellipse cx="559" cy="187" rx="12" ry="1.7" fill="#d0d098" opacity="0.7" transform="rotate(-13 559 187)"/><ellipse cx="580" cy="173" rx="9" ry="1.5" fill="#e0dcb0" opacity="0.7" transform="rotate(28 580 173)"/><ellipse cx="477" cy="157" rx="6" ry="3.0" fill="#e0dcb0" opacity="0.7" transform="rotate(47 477 157)"/><ellipse cx="528" cy="141" rx="10" ry="1.8" fill="#e0dcb0" opacity="0.7" transform="rotate(40 528 141)"/><ellipse cx="552" cy="132" rx="9" ry="3.6" fill="#5a7040" opacity="0.7" transform="rotate(0 552 132)"/><ellipse cx="523" cy="149" rx="9" ry="1.6" fill="#5a7040" opacity="0.7" transform="rotate(15 523 149)"/><ellipse cx="367" cy="105" rx="5" ry="2.3" fill="#7080a0" opacity="0.7" transform="rotate(4 367 105)"/><ellipse cx="459" cy="181" rx="7" ry="3.3" fill="#5a6038" opacity="0.7" transform="rotate(59 459 181)"/><ellipse cx="337" cy="206" rx="12" ry="3.7" fill="#7a8a50" opacity="0.7" transform="rotate(-47 337 206)"/><ellipse cx="439" cy="171" rx="13" ry="3.6" fill="#a0a878" opacity="0.7" transform="rotate(36 439 171)"/><ellipse cx="363" cy="129" rx="6" ry="1.6" fill="#a0a878" opacity="0.7" transform="rotate(-19 363 129)"/><ellipse cx="435" cy="150" rx="9" ry="3.7" fill="#7080a0" opacity="0.7" transform="rotate(-36 435 150)"/><ellipse cx="455" cy="126" rx="5" ry="2.6" fill="#7a8a50" opacity="0.7" transform="rotate(31 455 126)"/><ellipse cx="339" cy="155" rx="5" ry="3.7" fill="#3a5030" opacity="0.7" transform="rotate(57 339 155)"/><ellipse cx="434" cy="117" rx="8" ry="1.8" fill="#7080a0" opacity="0.7" transform="rotate(-56 434 117)"/><ellipse cx="454" cy="124" rx="7" ry="2.5" fill="#3a5030" opacity="0.7" transform="rotate(14 454 124)"/><ellipse cx="440" cy="168" rx="13" ry="1.7" fill="#7a8a50" opacity="0.7" transform="rotate(59 440 168)"/><ellipse cx="399" cy="135" rx="14" ry="3.9" fill="#5a6038" opacity="0.7" transform="rotate(7 399 135)"/><ellipse cx="379" cy="190" rx="11" ry="3.6" fill="#a0a878" opacity="0.7" transform="rotate(54 379 190)"/><ellipse cx="357" cy="123" rx="12" ry="1.9" fill="#3a5030" opacity="0.7" transform="rotate(10 357 123)"/><ellipse cx="347" cy="113" rx="13" ry="3.0" fill="#7a8a50" opacity="0.7" transform="rotate(-17 347 113)"/><ellipse cx="331" cy="108" rx="6" ry="3.3" fill="#5a6038" opacity="0.7" transform="rotate(44 331 108)"/><ellipse cx="356" cy="108" rx="7" ry="2.4" fill="#7080a0" opacity="0.7" transform="rotate(14 356 108)"/><ellipse cx="389" cy="156" rx="13" ry="2.4" fill="#7a8a50" opacity="0.7" transform="rotate(24 389 156)"/><ellipse cx="394" cy="113" rx="5" ry="3.7" fill="#3a5030" opacity="0.7" transform="rotate(54 394 113)"/><ellipse cx="418" cy="150" rx="13" ry="2.5" fill="#a0a878" opacity="0.7" transform="rotate(29 418 150)"/><ellipse cx="359" cy="170" rx="8" ry="2.3" fill="#7080a0" opacity="0.7" transform="rotate(10 359 170)"/><ellipse cx="368" cy="176" rx="11" ry="2.1" fill="#7a8a50" opacity="0.7" transform="rotate(-11 368 176)"/><ellipse cx="407" cy="195" rx="8" ry="2.2" fill="#a0a878" opacity="0.7" transform="rotate(-48 407 195)"/><ellipse cx="344" cy="172" rx="9" ry="2.0" fill="#3a5030" opacity="0.7" transform="rotate(35 344 172)"/><ellipse cx="379" cy="180" rx="11" ry="2.4" fill="#3a5030" opacity="0.7" transform="rotate(48 379 180)"/><ellipse cx="417" cy="117" rx="5" ry="1.9" fill="#5a6038" opacity="0.7" transform="rotate(1 417 117)"/><ellipse cx="417" cy="167" rx="14" ry="3.9" fill="#5a6038" opacity="0.7" transform="rotate(59 417 167)"/><ellipse cx="386" cy="125" rx="9" ry="1.8" fill="#5a6038" opacity="0.7" transform="rotate(-53 386 125)"/><ellipse cx="415" cy="187" rx="13" ry="2.8" fill="#5a6038" opacity="0.7" transform="rotate(10 415 187)"/><ellipse cx="378" cy="116" rx="8" ry="3.4" fill="#7a8a50" opacity="0.7" transform="rotate(-50 378 116)"/><ellipse cx="455" cy="177" rx="12" ry="3.8" fill="#5a6038" opacity="0.7" transform="rotate(20 455 177)"/><ellipse cx="431" cy="113" rx="9" ry="1.5" fill="#3a5030" opacity="0.7" transform="rotate(43 431 113)"/><ellipse cx="344" cy="145" rx="10" ry="3.9" fill="#3a5030" opacity="0.7" transform="rotate(33 344 145)"/><ellipse cx="369" cy="156" rx="5" ry="2.9" fill="#3a5030" opacity="0.7" transform="rotate(-44 369 156)"/><ellipse cx="396" cy="134" rx="8" ry="2.1" fill="#5a6038" opacity="0.7" transform="rotate(11 396 134)"/><ellipse cx="389" cy="209" rx="9" ry="2.9" fill="#98b878" opacity="0.7" transform="rotate(-5 389 209)"/><ellipse cx="510" cy="221" rx="5" ry="2.9" fill="#6a8858" opacity="0.7" transform="rotate(-39 510 221)"/><ellipse cx="478" cy="236" rx="14" ry="2.5" fill="#98b878" opacity="0.7" transform="rotate(-59 478 236)"/><ellipse cx="508" cy="205" rx="11" ry="2.4" fill="#6a8858" opacity="0.7" transform="rotate(-25 508 205)"/><ellipse cx="385" cy="205" rx="7" ry="3.9" fill="#98b878" opacity="0.7" transform="rotate(17 385 205)"/><ellipse cx="442" cy="213" rx="6" ry="2.8" fill="#c8d8a0" opacity="0.7" transform="rotate(19 442 213)"/><ellipse cx="433" cy="221" rx="11" ry="3.7" fill="#6a8858" opacity="0.7" transform="rotate(54 433 221)"/><ellipse cx="537" cy="239" rx="5" ry="3.1" fill="#6a8858" opacity="0.7" transform="rotate(-28 537 239)"/><ellipse cx="421" cy="215" rx="8" ry="2.7" fill="#c8d8a0" opacity="0.7" transform="rotate(-17 421 215)"/><ellipse cx="433" cy="205" rx="7" ry="2.8" fill="#c8d8a0" opacity="0.7" transform="rotate(-40 433 205)"/><ellipse cx="468" cy="217" rx="6" ry="1.7" fill="#c8d8a0" opacity="0.7" transform="rotate(-15 468 217)"/><ellipse cx="438" cy="240" rx="9" ry="2.8" fill="#c8d8a0" opacity="0.7" transform="rotate(28 438 240)"/><ellipse cx="445" cy="241" rx="4" ry="3.0" fill="#c8d8a0" opacity="0.7" transform="rotate(55 445 241)"/><ellipse cx="534" cy="229" rx="12" ry="2.0" fill="#98b878" opacity="0.7" transform="rotate(32 534 229)"/><ellipse cx="430" cy="221" rx="9" ry="3.4" fill="#98b878" opacity="0.7" transform="rotate(-54 430 221)"/><ellipse cx="414" cy="225" rx="12" ry="3.9" fill="#c8d8a0" opacity="0.7" transform="rotate(18 414 225)"/><ellipse cx="444" cy="212" rx="11" ry="1.7" fill="#c8d8a0" opacity="0.7" transform="rotate(58 444 212)"/><ellipse cx="433" cy="213" rx="12" ry="3.5" fill="#98b878" opacity="0.7" transform="rotate(17 433 213)"/><ellipse cx="540" cy="221" rx="8" ry="1.7" fill="#c8d8a0" opacity="0.7" transform="rotate(-43 540 221)"/><ellipse cx="482" cy="201" rx="13" ry="3.4" fill="#98b878" opacity="0.7" transform="rotate(10 482 201)"/></g></g></svg></div>
<div class="t" style="left:1255px;top:1200.7px;font-size:96px;color:#28303d;transform:scaleX(0.94);transform-origin:0 0">Playing in</div>

<div class="a" style="left:0;top:0;width:2880px;height:2px;background:#1e1e1e"></div>
<div class="a" style="left:0;top:2px;width:2880px;height:120px;background:#fff"></div>
<div class="a" style="left:0;top:122px;width:2880px;height:2px;background:#e0e0e0"></div>
<div class="a" style="left:0;top:2px;width:120px;height:120px;background:#23282d"></div>
<div class="a" style="left:0;top:2px;width:2px;height:120px;background:#4f535a"></div>
<svg style="left:24px;top:26px" width="72" height="72" viewBox="-2 -2 24 24"><path fill="#fff" d="M20 10c0-5.51-4.49-10-10-10C4.48 0 0 4.49 0 10c0 5.52 4.48 10 10 10 5.51 0 10-4.48 10-10zM7.78 15.37L4.37 6.220c.55-.02 1.17-.08 1.17-.08.5-.06.44-1.13-.06-1.110 0 0-1.45.11-2.37.11-.18 0-.37 0-.58-.01C4.12 2.69 6.87 1.11 10 1.11c2.33 0 4.45.87 6.05 2.34-.68-.11-1.65.39-1.65 1.58 0 .74.45 1.36.9 2.1.35.61.55 1.36.55 2.46 0 1.49-1.4 5-1.4 5l-3.03-8.37c.54-.02.82-.17.82-.17.5-.05.44-1.25-.06-1.22 0 0-1.44.12-2.38.12-.87 0-2.33-.12-2.33-.12-.5-.03-.56 1.2-.06 1.22l.92.08 1.26 3.41zM17.41 10c.24-.64.74-1.87.43-4.25.7 1.29 1.05 2.71 1.05 4.25 0 3.29-1.73 6.24-4.4 7.78.97-2.59 1.94-5.2 2.92-7.78zM6.1 18.09C3.12 16.65 1.11 13.53 1.11 10c0-1.3.23-2.48.72-3.59C3.25 10.3 4.67 14.2 6.1 18.09zm4.03-6.63l2.58 6.98c-.86.29-1.76.45-2.71.45-.79 0-1.57-.11-2.29-.33.81-2.38 1.62-4.74 2.42-7.1z"/></svg>
<div class="a" style="left:168px;top:30px;width:64px;height:64px;background:#007cba;border-radius:4px"></div>
<svg style="left:176px;top:38px" width="48" height="48" viewBox="0 0 24 24"><path fill="#fff" d="M18 11.2h-5.2V6h-1.6v5.2H6v1.6h5.2V18h1.6v-5.2H18z"/></svg>
<svg style="left:260px;top:38px" width="48" height="48" viewBox="0 0 24 24"><path fill="#1e1e1e" d="M20.1 5.1L16.9 2 6.2 12.7l-1.3 4.4 4.5-1.3L20.1 5.1zM4 20.8h8v-1.5H4v1.5z"/></svg>
<svg style="left:332px;top:38px" width="48" height="48" viewBox="0 0 24 24"><path fill="#b4b4b4" d="M18.3 11.7c-.6-.6-1.4-.9-2.3-.9H6.7l2.9-3.3-1.1-1-4.5 5L8.5 16l1-1-2.7-2.7H16c.5 0 .9.2 1.3.5 1 1 1 3.4 1 4.5v.3h1.5v-.2c0-1.5 0-4.3-1.5-5.7z"/></svg>
<svg style="left:404px;top:38px" width="48" height="48" viewBox="0 0 24 24"><path fill="#b4b4b4" d="M15.6 6.5l-1.1 1 2.9 3.3H8c-.9 0-1.7.3-2.3.9-1.4 1.5-1.4 4.2-1.4 5.6v.2h1.5v-.3c0-1.1 0-3.5 1-4.5.3-.3.7-.5 1.3-.5h9.2L14.5 15l1.1 1.1 4.6-4.6-4.6-5z"/></svg>
<svg style="left:476px;top:38px" width="48" height="48" viewBox="0 0 24 24"><path fill="#1e1e1e" d="M12 3.2c-4.8 0-8.8 3.9-8.8 8.8 0 4.8 3.9 8.8 8.8 8.8 4.8 0 8.8-3.9 8.8-8.8 0-4.8-4-8.8-8.8-8.8zm0 16c-4 0-7.2-3.3-7.2-7.2C4.8 8 8 4.8 12 4.8s7.2 3.3 7.2 7.2c0 4-3.2 7.2-7.2 7.2zM11 17h2v-6h-2v6zm0-8h2V7h-2v2z"/></svg>
<svg style="left:548px;top:38px" width="48" height="48" viewBox="0 0 24 24"><path fill="#1e1e1e" d="M13.8 5.2H3v1.5h10.8V5.2zm-3.6 12v1.5H21v-1.5H10.2zm7.2-6H6.6v1.5h10.8v-1.5z"/></svg>
<div class="sep" style="left:624px"></div>
<svg style="left:650px;top:38px" width="48" height="48" viewBox="0 0 48 48"><path fill="#1e1e1e" d="M12 10H36V37L24 27L12 37Z"/></svg>
<svg style="left:724px;top:14px" width="48" height="48" viewBox="0 0 24 24"><path fill="#b4b4b4" d="M6.5 12.4L12 8l5.5 4.4-.9 1.2L12 10l-4.5 3.6-1-1.2z"/></svg>
<svg style="left:724px;top:62px" width="48" height="48" viewBox="0 0 24 24"><path fill="#1e1e1e" d="M17.5 11.6L12 16l-5.5-4.4.9-1.2L12 14l4.5-3.6 1 1.2z"/></svg>
<div class="sep" style="left:794px"></div>
<svg style="left:820px;top:38px" width="48" height="48" viewBox="0 0 24 24"><path fill="#1e1e1e" d="M5 15h14V9H5v6zm0 4.8h14v-1.5H5v1.5zM5 4.2v1.5h14V4.2H5z"/></svg>
<div class="sep" style="left:892px"></div>
<div class="t" style="left:919px;top:44.5px;font-size:35px;font-weight:bold;color:#1e1e1e">H2</div>
<div class="sep" style="left:990px"></div>
<svg style="left:1016px;top:38px" width="48" height="48" viewBox="0 0 24 24"><path fill="#1e1e1e" d="M4 19.8h8.9v-1.5H4v1.5zm8.9-15.6H4v1.5h8.9V4.2zm-8.9 7v1.5h16v-1.5H4z"/></svg>
<div class="sep" style="left:1088px"></div>
<svg style="left:1114px;top:38px" width="48" height="48" viewBox="0 0 24 24"><path fill="#1e1e1e" d="M14.7 11.3c1-.6 1.5-1.6 1.5-3 0-2.3-1.3-3.4-4-3.4H7v14h5.8c1.4 0 2.5-.3 3.3-1 .8-.7 1.2-1.7 1.2-2.9.1-1.9-.8-3.1-2.6-3.7zm-5.1-4h2.3c.6 0 1.1.1 1.4.4.3.3.5.7.5 1.2s-.2 1-.5 1.2c-.3.3-.8.4-1.4.4H9.6V7.3zm4.6 9c-.4.3-1 .4-1.7.4H9.6v-3.9h2.9c.7 0 1.3.2 1.7.5.4.3.6.8.6 1.5s-.2 1.2-.6 1.5z"/></svg>
<svg style="left:1186px;top:38px" width="48" height="48" viewBox="0 0 24 24"><path fill="#1e1e1e" d="M12.5 5L10 19h1.9l2.5-14z"/></svg>
<svg style="left:1262px;top:42px" width="40" height="40" viewBox="0 0 20 20"><path fill="#1e1e1e" d="M17.74 2.76c1.68 1.69 1.68 4.41 0 6.1l-1.53 1.52c-1.12 1.12-2.7 1.47-4.14 1.09l2.62-2.61.76-.77.76-.76c.84-.84.84-2.2 0-3.04-.84-.85-2.2-.85-3.04 0l-.77.76-3.38 3.38c-.37-1.44-.02-3.02 1.1-4.14l1.52-1.53c1.69-1.68 4.42-1.68 6.1 0zM8.59 13.43l5.34-5.34c.42-.42.42-1.1 0-1.52-.44-.43-1.13-.39-1.53 0l-5.33 5.34c-.42.42-.42 1.1 0 1.52.44.43 1.13.39 1.52 0zm-.76 2.29l4.14-4.15c.38 1.44.03 3.02-1.09 4.14l-1.52 1.53c-1.69 1.68-4.41 1.68-6.1 0-1.68-1.68-1.68-4.42 0-6.1l1.53-1.52c1.12-1.12 2.7-1.47 4.14-1.1l-4.14 4.15c-.85.84-.85 2.2 0 3.050.84.84 2.2.84 3.04 0z"/></svg>
<svg style="left:1358px;top:38px" width="48" height="48" viewBox="0 0 24 24"><path fill="#1e1e1e" d="M17.5 11.6L12 16l-5.5-4.4.9-1.2L12 14l4.5-3.6 1 1.2z"/></svg>
<div class="sep" style="left:1428px"></div>
<svg style="left:1454px;top:38px" width="48" height="48" viewBox="0 0 24 24"><path fill="#1e1e1e" d="M13 19h-2v-2h2v2zm0-6h-2v-2h2v2zm0-6h-2V5h2v2z"/></svg>
<div class="t" style="left:2145px;top:49.5px;font-size:26px;color:#007cba;letter-spacing:0.5px">Save draft</div>
<div class="t" style="left:2316px;top:49.5px;font-size:26px;color:#007cba;letter-spacing:0.33px">Preview</div>
<div class="a" style="left:2448px;top:26px;width:136px;height:72px;background:#007cba;border-radius:4px"></div>
<div class="t" style="left:2470.5px;top:50.0px;font-size:26px;color:#fff;letter-spacing:0.75px">Publish</div>
<div class="a" style="left:2616px;top:26px;width:72px;height:72px;background:#1e1e1e;border-radius:4px"></div>
<svg style="left:2628px;top:38px" width="48" height="48" viewBox="0 0 24 24"><path fill="#fff" fill-rule="evenodd" d="M10.289 4.836A1 1 0 0111.275 4h1.306a1 1 0 01.987.836l.244 1.466c.787.26 1.503.679 2.108 1.218l1.393-.522a1 1 0 011.216.437l.653 1.13a1 1 0 01-.23 1.273l-1.148.944a6.025 6.025 0 010 2.435l1.149.946a1 1 0 01.23 1.272l-.653 1.13a1 1 0 01-1.216.437l-1.394-.522c-.605.54-1.32.958-2.108 1.218l-.244 1.466a1 1 0 01-.987.836h-1.306a1 1 0 01-.986-.836l-.244-1.466a5.995 5.995 0 01-2.108-1.218l-1.394.522a1 1 0 01-1.217-.436l-.653-1.131a1 1 0 01.23-1.272l1.149-.946a6.026 6.026 0 010-2.435l-1.148-.944a1 1 0 01-.23-1.272l.653-1.131a1 1 0 011.217-.437l1.393.522a5.994 5.994 0 012.108-1.218l.244-1.466zM14.929 12a3 3 0 11-6 0 3 3 0 016 0z" clip-rule="evenodd"/></svg>
<svg style="left:2700px;top:36px" width="70.0" height="52.0" viewBox="0 0 70 52">
<path d="M16.4 42 H15.9 A7 7 0 0 1 8.9 35 V18.8 A7 7 0 0 1 15.9 11.8 H31 M39.5 12.2 A5.5 5.5 0 0 1 43.9 17.6 V41.9 H28" fill="none" stroke="#000" stroke-width="1.9"/>
<path d="M16.6 15.6 L22.6 15.6 L28.4 29.5 L25.4 36.5 Z" fill="#000"/>
<path d="M34.2 6 L40.2 6 L25.8 40.5 C24 44.2 21.6 45.8 18 46.2 L18.6 41.4 C20.8 40.8 21.8 39.6 22.6 37.6 Z" fill="#000"/>
<circle cx="56.6" cy="18.3" r="7.3" fill="#77cc33"/>
<circle cx="56.6" cy="35.6" r="7.3" fill="#e3302f"/>
</svg>
<svg style="left:2788px;top:38px" width="48" height="48" viewBox="0 0 24 24"><path fill="#007cba" d="M13 19h-2v-2h2v2zm0-6h-2v-2h2v2zm0-6h-2V5h2v2z"/></svg>

<div class="a" style="left:2320px;top:124px;width:560px;height:1208px;background:#fbfbfb"></div>
<div class="a" style="left:2862px;top:218px;width:18px;height:2px;background:#e0e0e0"></div>
<div class="a" style="left:2862px;top:474px;width:18px;height:2px;background:#e0e0e0"></div>
<div class="a" style="left:2862px;top:932px;width:18px;height:2px;background:#e0e0e0"></div>
<div class="a" style="left:2862px;top:1030px;width:18px;height:2px;background:#e0e0e0"></div>
<div class="a" style="left:2302px;top:122px;width:556px;height:1220px;background:#fff;border:2px solid #cccccc;box-shadow:0 4px 10px rgba(0,0,0,0.06)"></div>
<div class="a" style="left:2304px;top:546px;width:556px;height:2px;background:#e0e0e0"></div>
<div class="a" style="left:2304px;top:802px;width:556px;height:2px;background:#e0e0e0"></div>
<div class="a" style="left:2304px;top:986px;width:556px;height:2px;background:#e0e0e0"></div>
<div class="a" style="left:2325px;top:207px;width:507px;height:122px;border:3px solid #007cba;border-radius:9px"></div>
<div class="t" style="left:2345px;top:161.4px;font-size:22px;color:#757575;-webkit-text-stroke:0.6px #757575">VIEW</div>
<div class="t" style="left:2345px;top:226.0px;font-size:26px;color:#1e1e1e;letter-spacing:0.74px">Top toolbar</div>
<div class="t" style="left:2345px;top:265.7px;font-size:24px;color:#757575;letter-spacing:0.69px">Access all block and document</div>
<div class="t" style="left:2345px;top:295.7px;font-size:24px;color:#757575;letter-spacing:0.59px">tools in a single place</div>
<div class="t" style="left:2345px;top:350.0px;font-size:26px;color:#1e1e1e;letter-spacing:0.85px">Spotlight mode</div>
<div class="t" style="left:2345px;top:389.7px;font-size:24px;color:#757575;letter-spacing:0.71px">Focus on one block at a time</div>
<div class="t" style="left:2345px;top:443.5px;font-size:26px;color:#1e1e1e;letter-spacing:0.66px">Fullscreen mode</div>
<div class="t" style="left:2345px;top:483.7px;font-size:24px;color:#757575;letter-spacing:0.95px">Work without distraction</div>
<div class="t" style="left:2345px;top:585.9px;font-size:22px;color:#757575;-webkit-text-stroke:0.6px #757575">EDITOR</div>
<div class="t" style="left:2345px;top:658.0px;font-size:26px;color:#1e1e1e;letter-spacing:0.57px">Visual editor</div>
<div class="t" style="left:2345px;top:730.5px;font-size:26px;color:#1e1e1e;letter-spacing:0.77px">Code editor</div>
<div class="t" style="left:2345px;top:841.9px;font-size:22px;color:#757575;-webkit-text-stroke:0.6px #757575">PLUGINS</div>
<div class="t" style="left:2345px;top:914.0px;font-size:26px;color:#1e1e1e;">Yoast SEO</div>
<div class="t" style="left:2345px;top:1025.4px;font-size:22px;color:#757575;-webkit-text-stroke:0.6px #757575">TOOLS</div>
<div class="t" style="left:2345px;top:1098.5px;font-size:26px;color:#1e1e1e;letter-spacing:0.66px">Block Manager</div>
<div class="t" style="left:2345px;top:1170.0px;font-size:26px;color:#1e1e1e;letter-spacing:0.53px">Manage all reusable blocks</div>
<div class="t" style="left:2345px;top:1242.0px;font-size:26px;color:#1e1e1e;letter-spacing:0.86px">Keyboard shortcuts</div>
<div class="t" style="left:2345px;top:1314.0px;font-size:26px;color:#1e1e1e;letter-spacing:0.38px">Welcome Guide</div>
<svg style="left:0;top:0" width="2880" height="1332" viewBox="0 0 2880 1332"><path d="M2688.2 468.6 L2697.8 477.6 H2692.8 V484.6 H2683.7 V477.6 H2679 Z" fill="none" stroke="#1e1e1e" stroke-width="2" stroke-linejoin="round"/><path d="M2701.2 469 H2708.2 L2714.7000000000003 484.6 H2720.9 M2712.7000000000003 469 H2720.9" fill="none" stroke="#1e1e1e" stroke-width="2.1"/><path d="M2728.212 474.22399999999993 H2738.588 M2728.212 478.976 H2738.588 M2731.124 471.31199999999995 V481.888 M2735.6760000000004 471.31199999999995 V481.888" fill="none" stroke="#1e1e1e" stroke-width="1.9"/><circle cx="2728.2" cy="471.3" r="2.9" fill="none" stroke="#1e1e1e" stroke-width="1.9"/><circle cx="2738.6" cy="471.3" r="2.9" fill="none" stroke="#1e1e1e" stroke-width="1.9"/><circle cx="2728.2" cy="481.9" r="2.9" fill="none" stroke="#1e1e1e" stroke-width="1.9"/><circle cx="2738.6" cy="481.9" r="2.9" fill="none" stroke="#1e1e1e" stroke-width="1.9"/><path d="M2740.5 734.5 L2749.9 743.6 H2745 V751 H2736.5 V743.6 H2731.1 Z" fill="none" stroke="#1e1e1e" stroke-width="2" stroke-linejoin="round"/><path d="M2753.4 735 H2760 L2767.0 750.8 H2773.2 M2765.0 735 H2773.2" fill="none" stroke="#1e1e1e" stroke-width="2.1"/><path d="M2780.808 740.2160000000001 H2791.5920000000006 M2780.808 744.784 H2791.5920000000006 M2783.816 737.2080000000001 V747.792 M2788.5840000000007 737.2080000000001 V747.792" fill="none" stroke="#1e1e1e" stroke-width="1.9"/><circle cx="2780.8" cy="737.2" r="3.0" fill="none" stroke="#1e1e1e" stroke-width="1.9"/><circle cx="2791.6" cy="737.2" r="3.0" fill="none" stroke="#1e1e1e" stroke-width="1.9"/><circle cx="2780.8" cy="747.8" r="3.0" fill="none" stroke="#1e1e1e" stroke-width="1.9"/><circle cx="2791.6" cy="747.8" r="3.0" fill="none" stroke="#1e1e1e" stroke-width="1.9"/><path d="M2758.4 1254.4 L2766.4 1246.4 L2774.5 1254.4" fill="none" stroke="#1e1e1e" stroke-width="2.4"/><path d="M2779.2 1247.2 H2785.6 L2793.2000000000003 1262.4 H2799.4 M2791.2000000000003 1247.2 H2799.4" fill="none" stroke="#1e1e1e" stroke-width="2.1"/></svg>
<div class="t" style="left:2745.5px;top:464.0px;font-size:26px;color:#1e1e1e;">F</div>
<div class="t" style="left:2797px;top:729.5px;font-size:26px;color:#1e1e1e;">M</div>
<div class="t" style="left:2801px;top:1242.0px;font-size:26px;color:#1e1e1e;">H</div>
<svg style="left:2776px;top:248px" width="48" height="48" viewBox="0 0 48 48"><path fill="none" stroke="#1e1e1e" stroke-width="2.4" d="M9.5 26.5 L20.5 35.5 L38.5 12"/></svg>
<svg style="left:2776px;top:452px" width="48" height="48" viewBox="0 0 48 48"><path fill="none" stroke="#1e1e1e" stroke-width="2.4" d="M9.5 26.5 L20.5 35.5 L38.5 12"/></svg>
<svg style="left:2776px;top:646px" width="48" height="48" viewBox="0 0 48 48"><path fill="none" stroke="#1e1e1e" stroke-width="2.4" d="M9.5 26.5 L20.5 35.5 L38.5 12"/></svg>
<svg style="left:2768.3px;top:902.7px" width="61.6" height="45.8" viewBox="0 0 70 52">
<path d="M16.4 42 H15.9 A7 7 0 0 1 8.9 35 V18.8 A7 7 0 0 1 15.9 11.8 H31 M39.5 12.2 A5.5 5.5 0 0 1 43.9 17.6 V41.9 H28" fill="none" stroke="#000" stroke-width="1.9"/>
<path d="M16.6 15.6 L22.6 15.6 L28.4 29.5 L25.4 36.5 Z" fill="#000"/>
<path d="M34.2 6 L40.2 6 L25.8 40.5 C24 44.2 21.6 45.8 18 46.2 L18.6 41.4 C20.8 40.8 21.8 39.6 22.6 37.6 Z" fill="#000"/>
<circle cx="56.6" cy="18.3" r="7.3" fill="#77cc33"/>
<circle cx="56.6" cy="35.6" r="7.3" fill="#e3302f"/>
</svg>
</body></html>
